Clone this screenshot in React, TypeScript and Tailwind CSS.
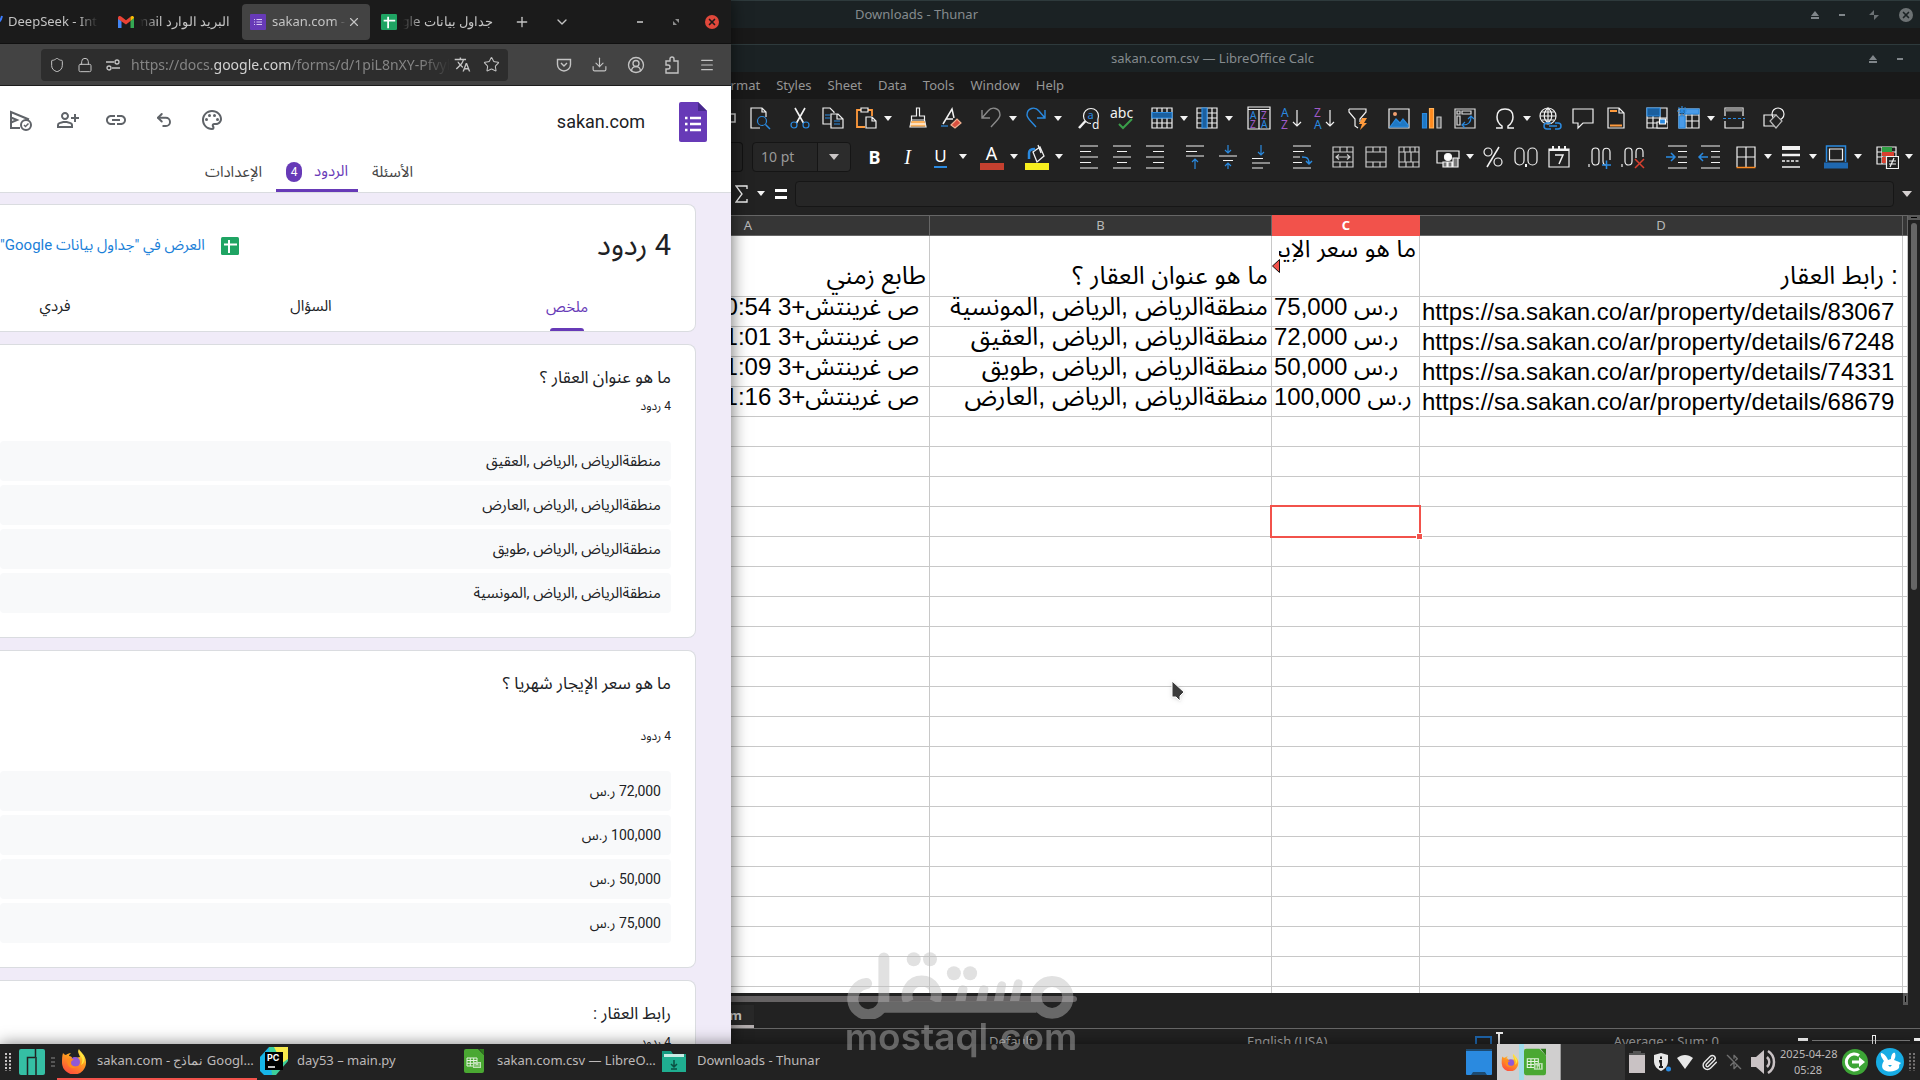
import React from 'react';
import {
  Shield, Lock, Star, Download, CircleUserRound, Puzzle, Menu, X, Plus, ChevronDown,
  Paperclip, BluetoothOff, Undo2,
} from 'lucide-react';
import { MdOutlinePalette, MdLink, MdOutlinePersonAddAlt, MdTranslate } from 'react-icons/md';

type Kids = { children?: React.ReactNode };

/* ---------- shared drawings ---------- */

function Ico({ children }: Kids) {
  return (
    <svg viewBox="0 0 24 24" className="size-6" fill="none" stroke="#f2f2f2" strokeWidth="1.2" aria-hidden="true">
      {children}
    </svg>
  );
}

function Caret() {
  return <svg viewBox="0 0 8 5" className="h-[5px] w-2" aria-hidden="true"><path d="M0 0h8L4 5z" fill="#f2f2f2" /></svg>;
}

function Firefox({ className }: { className: string }) {
  return (
    <svg viewBox="0 0 26 26" className={className} aria-hidden="true">
      <defs>
        <linearGradient id="fx" x1="0.8" y1="0" x2="0.3" y2="1">
          <stop offset="0" stopColor="#fff44f" /><stop offset="0.45" stopColor="#ff9a1f" /><stop offset="1" stopColor="#ff4a3d" />
        </linearGradient>
      </defs>
      <path d="M2 5c1 1 2 2 3 2 1-1 3-2 5-2-1 1-2 2-2 3 2 0 3 1 3 2h3l5-1c-1-3-3-5-1-8 1 3 7 6 7 13a12 12 0 0 1-24 1C1 11 1 8 2 5z" fill="url(#fx)" />
      <circle cx="14" cy="14" r="5" fill="#9059d6" />
      <path d="M6 11c2-1 5-1 7 1-2 0-3 1-3 3 0 3 4 4 7 3-2 3-8 3-10-1-1-2-1-4-1-6z" fill="#ff8a1e" />
      <path d="M18 2c2 3 1 6 3 8 1 2 0 5-1 7 2-1 4-4 3-7-1-4-4-5-5-8z" fill="#ffe83d" />
    </svg>
  );
}

function CalcDoc({ className }: { className: string }) {
  return (
    <svg viewBox="0 0 20 24" className={className} aria-hidden="true">
      <path d="M2 0h12l6 6v16a2 2 0 0 1-2 2H2a2 2 0 0 1-2-2V2a2 2 0 0 1 2-2z" fill="#4aa832" />
      <path d="M15 0h5v6z" fill="#2d7a1c" />
      <path d="M3 9h10v8H3zM3 11.5h10M3 14.3h10M6.300 9v8M9.700 9v8" fill="none" stroke="#e4f3df" />
      <rect x="9" y="13" width="8" height="6" fill="#bfe0b5" />
      <path d="M11 18v-3M13 18v-2M15 18v-4" stroke="#4aa832" />
    </svg>
  );
}

function SheetsIcon({ className }: { className: string }) {
  return (
    <svg viewBox="0 0 18 18" className={className} aria-hidden="true">
      <rect width="18" height="18" rx="1.500" fill="#1fa463" />
      <path d="M3 7.500h13M8 3v13" stroke="#fff" strokeWidth="2" />
    </svg>
  );
}

/* ---------- browser window ---------- */

function Tab({ icon, label, dir, width }: { icon: React.ReactNode; label: string; dir: 'ltr' | 'rtl'; width: string }) {
  return (
    <button className="flex items-center gap-[6px]">
      {icon}
      <span dir={dir} className={`${width} overflow-hidden whitespace-nowrap ${dir === 'ltr' ? 'text-left [mask-image:linear-gradient(to_left,transparent,#000_12px)]' : 'text-right [mask-image:linear-gradient(to_right,transparent,#000_18px)]'}`}>{label}</span>
    </button>
  );
}

function BrowserChrome() {
  return (
    <header className="shrink-0 text-[13px] text-[#c4c4c4]">
      <div className="flex h-11 items-center border-b border-[#111] bg-[#1b1b1b]">
        <div className="w-2 shrink-0 overflow-hidden">
          <svg viewBox="0 0 8 14" className="h-3.5 w-2" aria-hidden="true"><path d="M-4 6C-1 9 1 5 2 1" stroke="#3b7cff" strokeWidth="2" fill="none" /></svg>
        </div>
        <button className="w-[90px] overflow-hidden whitespace-nowrap text-left [mask-image:linear-gradient(to_left,transparent,#000_20px)]">DeepSeek - Into</button>
        <div className="ml-5 flex w-[124px] shrink-0">
          <Tab dir="rtl" width="w-[90px]" label="البريد الوارد Gmail" icon={
            <svg viewBox="0 0 16 12" className="h-3 w-4" aria-hidden="true">
              <path d="M0 1.500V12h3.500V5z" fill="#4285f4" /><path d="M16 1.500V12h-3.500V5z" fill="#34a853" />
              <path d="M0 2c0-2 2-2.500 3.500-1.300L8 4.200 12.500.7 12.500 5 8 8.500 0 3z" fill="#ea4335" /><path d="M12.500.7C14 -.5 16 0 16 2l-3.500 3z" fill="#fbbc04" />
            </svg>} />
        </div>
        <div className="flex h-9 w-32 shrink-0 items-center justify-between rounded bg-[#434343] pl-2 pr-[9px]">
          <Tab dir="ltr" width="w-[74px]" label="sakan.com - G" icon={
            <svg viewBox="0 0 16 16" className="size-4 shrink-0" aria-hidden="true">
              <rect width="16" height="16" rx="1" fill="#673ab7" /><path d="M4 5.500h1M4 8h1M4 10.500h1M6.500 5.500H12M6.500 8H12M6.500 10.500H12" stroke="#d9c9f5" />
            </svg>} />
          <button aria-label="Close tab"><X className="size-3.5" /></button>
        </div>
        <div className="ml-[11px] flex w-[113px] shrink-0">
          <Tab dir="rtl" width="w-[90px]" label="جداول بيانات Google" icon={<SheetsIcon className="size-4" />} />
        </div>
        <button aria-label="New tab" className="ml-5"><Plus className="size-4" /></button>
        <button aria-label="List all tabs" className="ml-6"><ChevronDown className="size-4" /></button>
        <div className="ml-auto flex items-center pr-px">
          <button aria-label="Minimize" className="flex w-9 justify-center"><span className="h-0.5 w-1.5 bg-[#a0a0a0]" /></button>
          <button aria-label="Restore" className="flex w-9 justify-center">
            <svg viewBox="0 0 16 16" className="size-4" aria-hidden="true"><path d="M7 5h4v4zM5 7v4h4z" fill="#8d8d8d" /></svg>
          </button>
          <button aria-label="Close" className="flex w-9 justify-center">
            <span className="flex size-[14px] items-center justify-center rounded-full bg-[#e0483b] text-[#1b1b1b]"><X className="size-2.5" strokeWidth={4} /></span>
          </button>
        </div>
      </div>
      <div className="flex h-[42px] items-center border-b border-[#1c1c1c] bg-[#434343]">
        <div className="ml-[41px] flex h-8 w-[467px] items-center rounded bg-[#2d2d2d] px-2">
          <Shield className="size-4" strokeWidth={1.5} />
          <Lock className="ml-3 size-4" strokeWidth={1.5} />
          <svg viewBox="0 0 16 16" className="ml-3 size-4" fill="none" stroke="#c4c4c4" strokeWidth="1.300" aria-hidden="true">
            <path d="M1 5h8M7 11h8" /><circle cx="12" cy="5" r="2" /><circle cx="4" cy="11" r="2" />
          </svg>
          <div role="textbox" aria-label="Address" tabIndex={0} className="ml-2.5 min-w-0 flex-1 overflow-hidden whitespace-nowrap text-sm text-[#858585] [mask-image:linear-gradient(to_left,transparent,#000_30px)]">
            https://docs.<span className="text-[#d2d2d2]">google.com</span>/forms/d/1piL8nXY-Pfvyh
          </div>
          <button aria-label="Translate page" className="ml-1"><MdTranslate className="size-[17px]" /></button>
          <button aria-label="Bookmark" className="ml-3"><Star className="size-[17px]" strokeWidth={1.5} /></button>
        </div>
        <div className="ml-auto flex items-center gap-[19px] pr-4">
          <button aria-label="Save to Pocket">
            <svg viewBox="0 0 16 16" className="size-4" fill="none" stroke="#c4c4c4" strokeWidth="1.400" aria-hidden="true"><path d="M1.500 2.500h13v5a6.500 6.500 0 0 1-13 0zM5 6l3 3 3-3" /></svg>
          </button>
          <button aria-label="Downloads"><Download className="size-[17px]" strokeWidth={1.6} /></button>
          <button aria-label="Account"><CircleUserRound className="size-[18px]" strokeWidth={1.8} /></button>
          <button aria-label="Extensions">
            <svg viewBox="0 0 16 18" className="h-[18px] w-4" fill="none" stroke="#c4c4c4" strokeWidth="1.400" aria-hidden="true"><path d="M6 5V3a2 2 0 0 1 4 0v2h4v12H2v-4h2a2 2 0 0 0 0-4H2V5z" /></svg>
          </button>
          <button aria-label="Menu"><Menu className="size-4" strokeWidth={1.8} /></button>
        </div>
      </div>
    </header>
  );
}

function FormHeader() {
  return (
    <div className="shrink-0 border-b border-[#dadce0] bg-white">
      <div className="flex h-[68px] items-center pr-6 pt-1">
        <svg viewBox="0 0 28 40" className="h-10 w-7" aria-hidden="true">
          <path d="M2 0h17l9 9v29a2 2 0 0 1-2 2H2a2 2 0 0 1-2-2V2a2 2 0 0 1 2-2z" fill="#673ab7" />
          <path d="M19 0v9h9z" fill="#47288c" />
          <path d="M11 16h11M11 22h11M11 28h11M6 16h2.500M6 22h2.500M6 28h2.500" stroke="#fff" strokeWidth="2.500" />
        </svg>
        <h1 dir="ltr" className="mr-[34px] text-lg text-[#202124]">sakan.com</h1>
        <div dir="ltr" className="ml-2 mr-auto mb-1 flex items-center gap-6 text-[#5f6368]">
          <button aria-label="منشور">
            <svg viewBox="0 0 24 24" className="size-6" fill="none" stroke="#5f6368" strokeWidth="2" aria-hidden="true">
              <path d="M12 20l-9 0V4l18 7.500M3 9.500l6 2.500-6 2.500" /><circle cx="18" cy="17" r="5" /><path d="M16 17l1.500 1.500L20.500 15.500" strokeWidth="1.500" />
            </svg>
          </button>
          <button aria-label="إضافة متعاونين"><MdOutlinePersonAddAlt className="size-6" /></button>
          <button aria-label="نسخ الرابط"><MdLink className="size-6" /></button>
          <button aria-label="تراجع" className="flex size-6 items-center justify-center"><Undo2 className="size-[18px]" strokeWidth={2.6} /></button>
          <button aria-label="تخصيص المظهر"><MdOutlinePalette className="size-6" /></button>
        </div>
      </div>
      <nav className="mr-[304px] flex h-[38px] pt-1.5 text-[15px] text-[#444]">
        <button className="mx-3.5 pb-2">الأسئلة</button>
        <button className="flex w-[82px] items-center justify-center gap-3 border-b-[3px] border-[#673ab7] pb-1.5 text-[#673ab7]">
          الردود<span className="flex h-5 w-4 items-center justify-center rounded-full bg-[#673ab7] text-xs text-white">4</span>
        </button>
        <button className="mx-3.5 pb-2">الإعدادات</button>
      </nav>
    </div>
  );
}

function QuestionCard({ title, gap, answers, size = 'text-sm' }: { title: string; gap: string; answers: string[]; size?: string }) {
  return (
    <section className="shrink-0 rounded-br-lg rounded-tr-lg border border-l-0 border-[#dadce0] bg-white pb-6 pr-6 pt-5">
      <h2 className="text-[17px] leading-[25px]">{title}</h2>
      <p className={`${gap} text-xs leading-4`}>4 ردود</p>
      <ul className={`mt-[27px] flex flex-col gap-1 ${size}`}>
        {answers.map((a) => <li key={a} className="flex h-10 items-center rounded bg-[#f8f9fa] px-2.5">{a}</li>)}
      </ul>
    </section>
  );
}

function BrowserWindow() {
  return (
    <section className="z-10 flex min-w-0 flex-[731] flex-col overflow-hidden bg-[#f0ebf8] shadow-[0_0_16px_rgba(0,0,0,0.6)]">
      <BrowserChrome />
      <div dir="rtl" className="flex min-h-0 flex-1 flex-col font-[Roboto,'Noto_Sans_Arabic','DejaVu_Sans',sans-serif] text-[#202124]">
        <FormHeader />
        <div className="flex min-h-0 flex-1 flex-col gap-3 overflow-hidden pr-[35px] pt-[11px]">
          <section className="shrink-0 overflow-hidden rounded-br-lg rounded-tr-lg border border-l-0 border-[#dadce0] bg-white">
            <div className="flex h-[81px] items-center pr-6">
              <h2 className="text-[29px]">4 ردود</h2>
              <a href="#sheet" className="mr-auto flex items-center gap-4 whitespace-nowrap text-[15px] text-[#1a80d8]">
                <SheetsIcon className="size-[18px]" />العرض في "جداول بيانات Google"
              </a>
            </div>
            <nav className="flex h-[45px] text-[15px]">
              <button className="flex w-64 shrink-0 flex-col items-center justify-between pt-2.5 text-[#673ab7]">ملخص<span className="h-[3px] w-[34px] rounded-t bg-[#673ab7]" /></button>
              <button className="w-64 shrink-0 pb-1">السؤال</button>
              <button className="w-64 shrink-0 pb-1">فردي</button>
            </nav>
          </section>
          <QuestionCard size="text-[15px]" title="ما هو عنوان العقار ؟" gap="mt-2" answers={[
            'منطقةالرياض ,الرياض ,العقيق', 'منطقةالرياض ,الرياض ,العارض', 'منطقةالرياض ,الرياض ,طويق', 'منطقةالرياض ,الرياض ,المونسية']} />
          <QuestionCard title="ما هو سعر الإيجار شهريا ؟" gap="mt-8" answers={['72,000 ر.س', '100,000 ر.س', '50,000 ر.س', '75,000 ر.س']} />
          <QuestionCard title="رابط العقار :" gap="mt-2" answers={[]} />
        </div>
      </div>
    </section>
  );
}

/* ---------- spreadsheet window ---------- */

function WinButtons({ full }: { full?: boolean }) {
  return (
    <div className="ml-auto flex items-center text-[#858b8e]">
      <button aria-label="Roll up" className="flex w-[27px] justify-center">
        <svg viewBox="0 0 10 10" className="size-2.5" aria-hidden="true"><path d="M5 1l4 5H1zM1 7h8v2H1z" fill="#80868a" /></svg>
      </button>
      <button aria-label="Minimize" className="flex w-[27px] justify-center"><span className="h-0.5 w-1.5 bg-[#80868a]" /></button>
      {full && (
        <>
          <button aria-label="Restore" className="flex w-[37px] justify-center">
            <svg viewBox="0 0 10 10" className="size-2.5" aria-hidden="true"><path d="M5 0v5H0zM5 5h5L5 10z" fill="#6b7174" /></svg>
          </button>
          <button aria-label="Close" className="mx-[7px] flex size-[14px] items-center justify-center rounded-full bg-[#6d7274] text-[#1b2224]"><X className="size-2.5" strokeWidth={4} /></button>
        </>
      )}
    </div>
  );
}

function B({ label, arrow, children }: { label: string; arrow?: boolean; children: React.ReactNode }) {
  return (
    <>
      <button aria-label={label} title={label} className="flex w-[33px] shrink-0 justify-center">{children}</button>
      {arrow && <button aria-label={`${label} options`} className="flex w-3 shrink-0 justify-center"><Caret /></button>}
    </>
  );
}

function Sep({ className = 'w-[7px]' }: { className?: string }) {
  return <span className={`${className} shrink-0`} />;
}

function T({ x, y, s = 10, c = '#f2f2f2', children }: { x: number; y: number; s?: number; c?: string; children: React.ReactNode }) {
  return <text x={x} y={y} fontSize={s} fill={c} stroke="none" fontFamily="Noto Sans, sans-serif">{children}</text>;
}

const blue = '#2a8ae0';

function StandardBar() {
  return (
    <div className="flex h-[38px] shrink-0 items-center overflow-hidden">
      <div className="w-3 shrink-0 overflow-hidden"><svg viewBox="0 0 12 24" className="h-6 w-3" aria-hidden="true"><path d="M-6 8H4v8H0" stroke="#ccc" fill="none" strokeWidth="1.5" /></svg></div>
      <B label="Print preview"><Ico><path d="M12 22H3V2h11l4 4v5M14 2v4h4" /><g stroke={blue}><circle cx="14" cy="15" r="4.500" /><path d="M17.500 18.500 22 23" strokeWidth="1.500" /></g></Ico></B>
      <Sep />
      <B label="Cut"><Ico><path d="M7 2l8.500 15M17 2L8.500 17" strokeWidth="1.600" /><g stroke={blue}><circle cx="6" cy="19" r="3" /><circle cx="18" cy="19" r="3" /></g></Ico></B>
      <B label="Copy"><Ico><path d="M10 18H2V2h7l4 4v1M10 22V8h7l5 5v9zM16 8v5h6" /><path d="M4 9h5M4 12h5M13 15h6M13 18h6" stroke={blue} /></Ico></B>
      <B label="Paste" arrow><Ico><path d="M7 4H3v17h8M14 4h4v6" stroke="#ff9a3c" strokeWidth="1.800" /><path d="M7 2h7v4H7zM12 22V11h6l4 4v7zM18 11v4h4" /></Ico></B>
      <Sep />
      <B label="Clone formatting"><Ico><path d="M10.500 2h3v8h5v4H5.500v-4h5zM5.500 14 4 21h16l-1.500-7" /><path d="M5.500 15h13l1 5.500h-15z" fill="#ffb35c" stroke="none" /><path d="M5 18h14" stroke="#fff" /></Ico></B>
      <B label="Clear formatting"><Ico><path d="M4 18 13 3l2 9M7 13h7" strokeWidth="1.500" /><path d="M2 20h7" stroke={blue} /><path d="M12 19l6-6 4 4-6 5z" fill="#d9503f" stroke="#f0b090" /></Ico></B>
      <Sep />
      <B label="Undo" arrow><Ico><path d="M3 4v8h8M3 12 9 5c4-5 12-3 12 4 0 3-2 4-9 12" stroke="#8b8b8b" strokeWidth="1.400" /></Ico></B>
      <B label="Redo" arrow><Ico><path d="M21 4v8h-8M21 12 15 5C11 0 3 2 3 9c0 3 2 4 9 12" stroke={blue} strokeWidth="1.400" /></Ico></B>
      <Sep className="w-2" />
      <B label="Find"><Ico><circle cx="14" cy="10" r="7.500" /><path d="M8.500 15 2 22" strokeWidth="2.500" /><T x={10.5} y={13} s={11} c={blue}>a</T><rect x="14" y="13" width="9" height="10" fill="#222" stroke="none" /><T x={15} y={23} s={12}>d</T></Ico></B>
      <B label="Spelling"><Ico><T x={0} y={12} s={14}>abc</T><path d="M9 18l4 4 9-9" stroke="#3a9e4a" strokeWidth="2" /></Ico></B>
      <Sep />
      <B label="Row" arrow><Ico><path d="M2 2h20v20H2zM2 12h20M2 17h20M7 2v20M12 2v20M17 2v20" /><path d="M2 6.500h20v5.500H2z" fill="#1b5f9e" stroke={blue} /></Ico></B>
      <B label="Column" arrow><Ico><path d="M2 2h20v20H2zM2 7h20M2 12h20M2 17h20M12 2v20M17 2v20" /><path d="M7 2h5v20H7z" fill="#1b5f9e" stroke={blue} /></Ico></B>
      <Sep />
      <B label="Sort"><Ico><path d="M1 1h22v22H1zM1 3.500h22M12 3v20" /><T x={3} y={13} c={blue}>A</T><T x={3} y={22} c="#a05bc8">Z</T><T x={14} y={13} c="#a05bc8">Z</T><T x={14} y={22} c={blue}>A</T></Ico></B>
      <B label="Sort ascending"><Ico><T x={1} y={11} s={12} c={blue}>A</T><T x={1} y={23} s={12} c="#a05bc8">Z</T><path d="M17 4v16M13 16l4 4 4-4" /></Ico></B>
      <B label="Sort descending"><Ico><T x={1} y={11} s={12} c="#a05bc8">Z</T><T x={1} y={23} s={12} c={blue}>A</T><path d="M17 4v16M13 16l4 4 4-4" /></Ico></B>
      <B label="AutoFilter"><Ico><path d="M3 3h17v3l-6 7v3M3 3v3l6 7v7l3 2" /><path d="M16 12h5l-3 5h3l-7 7 2-6h-3z" fill="#ff9a3c" stroke="none" /></Ico></B>
      <Sep className="w-2" />
      <B label="Insert image"><Ico><path d="M2 3h20v19H2z" /><path d="M3 21l6-8 4 4 3-4 5 6v2z" fill="#1f78c4" stroke={blue} /><circle cx="8" cy="8" r="2" fill="#f0a070" stroke="none" /></Ico></B>
      <B label="Insert chart"><Ico><path d="M2.500 7.500h4V22h-4z" fill="#1f78c4" stroke={blue} /><path d="M9.500 2.500h4V22h-4z" fill="#ff8a1e" stroke="#ffb35c" /><path d="M17 11h4v11h-4z" fill="#555" stroke="#ccc" /></Ico></B>
      <B label="Pivot table"><Ico><path d="M2 3h20v19H2zM4 5h3v3H4zM9 5h9v3H9zM4 10h3v9H4z" stroke="#ddd" /><path d="M10 19c6 0 8-3 8-8M15 13l3-3 3 3M12 16l-3 3 3 3" stroke={blue} /></Ico></B>
      <Sep />
      <B label="Special character" arrow><Ico><path d="M3 22h6v-2c-3-2-5-4-5-9 0-5 3-8 8-8s8 3 8 8c0 5-2 7-5 9v2h6" strokeWidth="1.500" /></Ico></B>
      <B label="Hyperlink"><Ico><circle cx="10" cy="10" r="8" /><path d="M10 2v14M2 10h16M3.500 6h13M4 14h12M10 2c-5 4-5 11 0 15M10 2c5 4 5 11 0 15" /><path d="M13 17H9c-4 0-4 6 0 6h4M17 17h3c4 0 4 6 0 6h-3M11 20h8" stroke={blue} strokeWidth="1.500" /></Ico></B>
      <B label="Comment"><Ico><path d="M2 3h20v14H12l-5 5v-5H2z" /></Ico></B>
      <B label="Headers and footers"><Ico><path d="M4 2h11l5 5v15H4zM15 2v5h5" /><path d="M6 5h7M6 19.500h12" stroke="#ff9a3c" strokeWidth="2" /></Ico></B>
      <Sep />
      <B label="Print area"><Ico><path d="M3 2h20v20H3zM3 12h20M3 17h20M9 2v20M16 2v20" /><path d="M3 2h13v8H3z" fill="#1b5f9e" stroke={blue} /><path d="M13 16h11v6H13z" fill="#222" /><path d="M15.500 13h6v5h-6z" fill={blue} stroke="#fff" /></Ico></B>
      <B label="Freeze" arrow><Ico><path d="M2 3h20v19H2zM9 3v19M15 3v19M2 9h20M2 15h20" /><path d="M8 3h14v5H8zM2 10h6v12H2z" fill="#4a9be8" stroke={blue} /><path d="M5 0v10M0 5h10M1.500 1.500l7 7M8.500 1.500l-7 7" stroke={blue} /></Ico></B>
      <B label="Split window"><Ico><path d="M3 10V2h18v8M3 15v7h18v-7" /><path d="M3 4h18" stroke="#888" strokeWidth="3" /><path d="M1 12.500h22" stroke={blue} strokeDasharray="3 2" /></Ico></B>
      <Sep />
      <B label="Draw functions"><Ico><path d="M2 9h12v11H2z" /><circle cx="16" cy="8" r="6" /><path d="M14 9l6 6-6 7-6-7z" fill="#222" stroke="#bbb" /></Ico></B>
    </div>
  );
}

function FormatBar() {
  return (
    <div className="flex h-[39px] shrink-0 items-center overflow-hidden">
      <span className="mr-[9px] h-[30px] w-3 shrink-0 rounded-r border border-l-0 border-[#111]" />
      <div className="flex h-[30px] w-[99px] shrink-0 rounded border border-[#151515] bg-[#262626]">
        <input aria-label="Font size" defaultValue="10 pt" className="w-16 bg-transparent pl-2 text-sm text-[#999] outline-none" />
        <button aria-label="Font size list" className="flex flex-1 items-center justify-center rounded-r border-l border-[#151515] bg-[#2c2c2c]"><svg viewBox="0 0 10 6" className="h-1.5 w-2.5" aria-hidden="true"><path d="M0 0h10L5 6z" fill="#c9c5c5" /></svg></button>
      </div>
      <Sep />
      <B label="Bold"><span className="text-lg font-bold leading-6 text-white">B</span></B>
      <B label="Italic"><span className="font-['Liberation_Serif',serif] text-xl italic leading-6 text-white">I</span></B>
      <B label="Underline" arrow><span className="border-b-2 border-[#2a8ae0] text-[17px] leading-5 text-white">U</span></B>
      <Sep className="w-1.5" />
      <B label="Font color" arrow><span className="flex w-6 justify-center border-b-[7px] border-[#c5402f] text-lg leading-[19px] text-white">A</span></B>
      <B label="Highlighting" arrow><svg viewBox="0 0 24 26" className="h-[26px] w-6" fill="none" stroke="#f2f2f2" strokeWidth="1.300" aria-hidden="true"><path d="M8 8l7-5 4 9-7 6zM13 1l3 8" /><path d="M4 15V9c0-3 3-4 6-4" stroke={blue} strokeWidth="2.500" /><path d="M0 22.500h24" stroke="#f7ef1e" strokeWidth="7" /></svg></B>
      <Sep />
      <B label="Align left"><Ico><path d="M3 1h18M3 6.500h11M3 12h18M3 17.500h11M3 23h18" /></Ico></B>
      <B label="Align center"><Ico><path d="M3 1h18M7 6.500h10M3 12h18M7 17.500h10M3 23h18" /></Ico></B>
      <B label="Align right"><Ico><path d="M3 1h18M10 6.500h11M3 12h18M10 17.500h11M3 23h18" /></Ico></B>
      <Sep />
      <B label="Align top"><Ico><path d="M3 1h18M3 6.500h11M3 11h18" /><path d="M12 24V14M9 17l3-3 3 3" stroke={blue} /></Ico></B>
      <B label="Center vertically"><Ico><path d="M3 11h18M7 15.500h10" /><path d="M12 0v8M9 5l3 3 3-3M12 24v-6M9 21l3-3 3 3" stroke={blue} /></Ico></B>
      <B label="Align bottom"><Ico><path d="M3 13.500h11M3 18h18M3 23h11" /><path d="M12 0v10M9 7l3 3 3-3" stroke={blue} /></Ico></B>
      <Sep className="w-2" />
      <B label="Wrap text"><Ico><path d="M3 1h18M3 6.500h11M3 12h7M3 17.500h9M3 23h18" /><path d="M12 12c6 0 7 2 7 7M16 16l3 3 3-3" stroke={blue} strokeWidth="1.500" /></Ico></B>
      <Sep className="w-2" />
      <B label="Merge and center"><Ico><path d="M2 2h20v20H2zM2 7h20M2 17h20M9 2v5M16 2v5M9 17v5M16 17v5M5 12h14M8 9.500 5 12l3 2.500M16 9.500l3 2.500-3 2.500" stroke="#ccc" /></Ico></B>
      <B label="Merge cells"><Ico><path d="M2 2h20v20H2zM2 7h20M2 17h20M9 2v5M16 2v5M9 17v5M16 17v5" stroke="#ccc" /></Ico></B>
      <B label="Unmerge cells"><Ico><path d="M2 2h20v20H2zM2 7h20M2 17h20M7 2v5M13 2v5M18 2v5M8 7v10M14 7v10M9 17v5M16 17v5" stroke="#ccc" /></Ico></B>
      <Sep className="w-1.5" />
      <B label="Currency" arrow><Ico><path d="M9 18H1V6h22v8" /><circle cx="12" cy="12" r="3.500" fill="#fff" /><path d="M7 17h4v5H7zM12 17h4v5h-4zM17 13h5v9h-5z" fill="#777" /></Ico></B>
      <B label="Percent"><Ico><circle cx="7" cy="7" r="4" /><circle cx="17" cy="17" r="4" /><path d="M18 2 6 22" strokeWidth="1.500" /></Ico></B>
      <B label="Number"><Ico><rect x="1" y="3" width="9" height="17" rx="4.500" /><rect x="14" y="3" width="9" height="17" rx="4.500" /><path d="M12 19v3" strokeWidth="2" /></Ico></B>
      <B label="Date"><Ico><path d="M2 4h20v18H2z" /><path d="M2 5h20M6 1v5M12 1v5M18 1v5" strokeWidth="2" /><path d="M8 10h8l-4 9" strokeWidth="1.500" /></Ico></B>
      <Sep className="w-2" />
      <B label="Add decimal"><Ico><rect x="4" y="3" width="7" height="17" rx="3.500" /><path d="M22 15V7c0-5-7-5-7 0v9c0 2 1 4 3 4M1 19v3" /><path d="M14 20h9M18.500 15.500V25" stroke={blue} strokeWidth="1.500" /></Ico></B>
      <B label="Delete decimal"><Ico><rect x="4" y="3" width="7" height="17" rx="3.500" /><path d="M22 12V7c0-5-7-5-7 0v6M1 19v3" /><path d="M14 14l9 9M23 14l-9 9" stroke="#d9402f" strokeWidth="1.500" /></Ico></B>
      <Sep className="w-2.5" />
      <B label="Increase indent"><Ico><path d="M4 1h19M14 6.500h9M14 12h9M14 17.500h9M4 23h19" /><path d="M2 12h8M7 8l4 4-4 4" stroke={blue} strokeWidth="1.500" /></Ico></B>
      <B label="Decrease indent"><Ico><path d="M4 1h19M14 6.500h9M14 12h9M14 17.500h9M4 23h19" /><path d="M11 12H2M6 8l-4 4 4 4" stroke={blue} strokeWidth="1.500" /></Ico></B>
      <Sep className="w-1" />
      <B label="Borders" arrow><Ico><path d="M3 22V2h18v20M12 2v20M3 12h18" /><path d="M2.500 22.500h19" stroke="#ff8a1e" strokeWidth="1.500" /></Ico></B>
      <B label="Border style" arrow><Ico><path d="M3 3h18" strokeWidth="4" /><path d="M3 10h18" strokeWidth="2.500" /><path d="M3 16h18" strokeWidth="1.500" strokeDasharray="3 1.500" /><path d="M3 22h18" strokeWidth="1.500" /></Ico></B>
      <B label="Border color" arrow><Ico><path d="M2.500 17V1h19v16" stroke={blue} strokeWidth="1.500" /><path d="M5.500 4h13v11h-13z" /><path d="M0 20.500h24" stroke="#1f68b0" strokeWidth="6" /></Ico></B>
      <Sep className="w-1.5" />
      <B label="Conditional formatting" arrow><Ico><path d="M2 2h19v17H2zM2 7h19M2 12h19M7 2v17" /><path d="M7 2h10v5H7z" fill="#2f9e44" stroke="none" /><path d="M7 7h12v4H7zM7 12h5v6H7z" fill="#d9402f" stroke="none" /><path d="M11.500 11.500h12v12h-12z" fill="#222" /><path d="M14 16h7M14 19h7M19 13l-4 9" /></Ico></B>
    </div>
  );
}

const records = [
  { stamp: '2025/04/28 5:20:54 ص غرينتش+3', title: 'منطقةالرياض ,الرياض ,المونسية', price: '75,000 ر.س', url: 'https://sa.sakan.co/ar/property/details/83067' },
  { stamp: '2025/04/28 5:21:01 ص غرينتش+3', title: 'منطقةالرياض ,الرياض ,العقيق', price: '72,000 ر.س', url: 'https://sa.sakan.co/ar/property/details/67248' },
  { stamp: '2025/04/28 5:21:09 ص غرينتش+3', title: 'منطقةالرياض ,الرياض ,طويق', price: '50,000 ر.س', url: 'https://sa.sakan.co/ar/property/details/74331' },
  { stamp: '2025/04/28 5:21:16 ص غرينتش+3', title: 'منطقةالرياض ,الرياض ,العارض', price: '100,000 ر.س', url: 'https://sa.sakan.co/ar/property/details/68679' },
];

const cell = 'border-b border-r border-[#c8c8c8] p-0 align-top overflow-hidden whitespace-nowrap';

function Sheet() {
  const head = 'border-y border-r border-[#666] p-0 text-[13px] font-normal leading-[17px]';
  return (
    <div className="flex min-h-0 flex-1 overflow-hidden bg-white">
      <div className="min-w-0 flex-1 overflow-hidden">
        <table className="w-full table-fixed border-separate border-spacing-0 font-['Liberation_Sans','Noto_Sans_Arabic','DejaVu_Sans',sans-serif] text-2xl leading-[27px] text-black">
          <colgroup><col className="w-[199px]" /><col className="w-[342px]" /><col className="w-[148px]" /><col /><col className="w-[5px]" /></colgroup>
          <thead className="font-['Noto_Sans',sans-serif]">
            <tr className="h-[21px] bg-[#363636] text-[#b8b8b8]">
              <th className={`${head} pr-[164px]`}>A</th><th className={head}>B</th>
              <th className="border-y border-[#f2524b] bg-[#f2524b] p-0 text-[13px] font-bold leading-[17px] text-white">C</th>
              <th className={head}>D</th><th className={head} />
            </tr>
          </thead>
          <tbody>
            <tr className="h-[61px] text-[25px]">
              <td dir="rtl" className={`${cell} pr-[3px]`}><div className="mt-[26px]">طابع زمني</div></td>
              <td dir="rtl" className={`${cell} pr-[3px]`}><div className="mt-[26px]">ما هو عنوان العقار ؟</div></td>
              <td dir="rtl" className={`${cell} relative pr-[3px]`}>
                <div className="ml-[7px] overflow-hidden text-2xl leading-[26px]">ما هو سعر الإيجار</div>
                <svg viewBox="0 0 8 14" className="absolute left-0 top-[23px] h-3.5 w-2" aria-hidden="true"><path d="M7.500.5v13L.5 7z" fill="#f2524b" stroke="#111" /></svg>
              </td>
              <td dir="ltr" className={`${cell} pr-1 text-right`}><div className="mt-[26px]">رابط العقار :</div></td>
              <td className={cell} />
            </tr>
            {records.map((r) => (
              <tr key={r.url} className="h-[30px]">
                <td dir="ltr" className={`${cell} pr-2.5`}><div className="flex h-[29px] justify-end overflow-hidden leading-[19px]">{r.stamp}</div></td>
                <td dir="rtl" className={`${cell} pr-[3px]`}><div className="h-[29px] overflow-hidden text-[25px] leading-[19px]">{r.title}</div></td>
                <td dir="ltr" className={`${cell} pl-0.5`}><div className="h-[29px] overflow-hidden leading-[19px]">{r.price}</div></td>
                <td dir="ltr" className={`${cell} pl-0.5`}><div className="h-[29px] overflow-hidden leading-[30px]">{r.url}</div></td>
                <td className={cell} />
              </tr>
            ))}
            {Array.from({ length: 20 }, (_, i) => (
              <tr key={i} className="h-[30px]">
                <td className={cell} /><td className={cell} />
                {i === 3
                  ? <td className="relative border-b border-r border-[#c8c8c8] p-0"><span className="absolute -inset-0.5 border-2 border-[#f2524b]" /><span className="absolute -bottom-1 -right-1 size-[7px] border border-white bg-[#f2524b]" /></td>
                  : <td className={cell} />}
                <td className={cell} /><td className={cell} />
              </tr>
            ))}
          </tbody>
        </table>
      </div>
      <div className="flex w-3 shrink-0 flex-col items-center bg-[#222]">
        <span className="flex h-[5px] w-full items-center justify-center bg-[#5a5a5a]"><span className="h-px w-1.5 bg-black" /></span>
        <span className="mt-[3px] h-[367px] w-1.5 rounded-full bg-[#666]" />
      </div>
    </div>
  );
}

function SpreadsheetWindow() {
  return (
    <section className="flex min-w-0 flex-[1189] flex-col overflow-hidden bg-[#222] text-[13px]">
      <div className="flex h-7 shrink-0 items-center border-t border-[#2e3a3c] bg-[#1b2224] text-[#858b8e]">
        <span className="ml-[124px]">Downloads - Thunar</span>
        <WinButtons full />
      </div>
      <div className="h-4 shrink-0 bg-[#191919]" />
      <div className="flex h-7 shrink-0 items-center border-t border-[#2e3a3c] bg-[#1b2224] text-[#858b8e]">
        <span className="ml-[380px]">sakan.com.csv — LibreOffice Calc</span>
        <WinButtons /><span className="w-[7px]" />
      </div>
      <nav className="flex h-[27px] shrink-0 items-center gap-4 bg-[#191919] text-[#969696]">
        <button className="-ml-[15px]">Format</button><button>Styles</button><button>Sheet</button><button>Data</button>
        <button>Tools</button><button>Window</button><button>Help</button>
      </nav>
      <StandardBar />
      <FormatBar />
      <div className="flex h-[39px] shrink-0 items-center gap-2 pb-1 pr-2">
        <div className="flex w-9 items-center gap-2 pl-1">
          <button aria-label="Select function"><svg viewBox="0 0 14 18" className="h-[18px] w-3.5" fill="none" stroke="#eee" strokeWidth="1.300" aria-hidden="true"><path d="M12 4V1H1l6 8-6 8h11v-3" /></svg></button>
          <Caret />
        </div>
        <button aria-label="Formula" className="flex w-3 flex-col gap-1"><span className="h-[3px] bg-white" /><span className="h-[3px] bg-white" /></button>
        <input aria-label="Input line" className="h-[26px] min-w-0 flex-1 rounded border border-[#161616] bg-[#262626]" />
        <button aria-label="Expand formula bar"><svg viewBox="0 0 10 6" className="h-1.5 w-2.5" aria-hidden="true"><path d="M0 0h10L5 6z" fill="#d5d0d0" /></svg></button>
      </div>
      <Sheet />
      <div className="flex h-[35px] shrink-0 flex-col">
        <div className="flex h-3 items-start">
          <span className="mt-[3px] h-1.5 w-[346px] rounded-r-full bg-[#666364]" />
          <span className="ml-auto mr-3 flex h-3 w-[5px] items-center justify-center bg-[#5a5a5a]"><span className="h-1.5 w-px bg-black" /></span>
        </div>
        <button className="flex h-[23px] w-[23px] items-end justify-end overflow-hidden border-b-[3px] border-[#b5afb0] bg-[#292929] pr-3 font-bold text-[#c8c8c8]">sakan.com</button>
      </div>
      <div className="flex h-4 shrink-0 items-start overflow-hidden border-t border-[#666] pt-[3px] leading-[18px] text-[#a8a8a8]">
        <span className="ml-[258px] w-[258px]">Default</span>
        <span className="w-[228px]">English (USA)</span>
        <span className="mt-1 h-3 w-[17px] border-2 border-[#1f68b0]" />
        <span className="ml-1 h-4 w-[7px] border-t-2 border-[#eee] px-[2px]"><span className="block h-4 w-0.5 bg-[#eee]" /></span>
        <span className="ml-auto mr-[79px]">Average: ; Sum: 0</span>
        <span className="mt-1.5 h-[3px] w-2.5 bg-white" />
        <span className="ml-1 mr-1 mt-2 flex h-px w-[98px] items-center justify-end bg-[#888]"><span className="mr-[34px] h-3 w-1 shrink-0 border border-white" /></span>
        <span className="mt-1.5 h-[3px] w-1.5 bg-white" />
      </div>
    </section>
  );
}

/* ---------- taskbar ---------- */

function Grip() {
  return <svg viewBox="0 0 8 20" className="h-5 w-2 shrink-0" aria-hidden="true"><path d="M2 1v18M6 1v18" stroke="#c9c5c5" strokeWidth="2" strokeDasharray="2 1.500" /></svg>;
}

function Task({ icon, label, active }: { icon: React.ReactNode; label: string; active?: boolean }) {
  return (
    <button className={`flex h-full w-[200px] shrink-0 items-center gap-2.5 border-b-2 pl-1 text-left ${active ? 'border-[#f2524b]' : 'border-transparent'}`}>
      <span className="flex w-[26px] shrink-0 justify-center">{icon}</span>
      <span className="truncate">{label}</span>
    </button>
  );
}

function Taskbar() {
  return (
    <footer className="z-20 flex h-9 shrink-0 items-center bg-[#222] text-[13px] text-[#bdb9b9] shadow-[0_0_16px_rgba(0,0,0,0.5)]">
      <div className="ml-1 flex items-center"><Grip /></div>
      <button aria-label="Applications" className="ml-[7px]">
        <svg viewBox="0 0 26 26" className="size-[26px]" aria-hidden="true"><rect width="26" height="26" rx="2" fill="#35bfa4" /><path d="M8.500 26V8.500H16M16.500 0v8.500M17 8v18" stroke="#222" strokeWidth="1.500" fill="none" /></svg>
      </button>
      <svg viewBox="0 0 4 10" className="ml-1.5 mr-0.5 h-2.5 w-1" aria-hidden="true"><path d="M0 1h4M0 5h4M0 9h4" stroke="#888" /></svg>
      <Task active icon={<Firefox className="size-[26px]" />} label="sakan.com - نماذج Google Forms" />
      <Task label="day53 – main.py" icon={
        <svg viewBox="0 0 28 28" className="size-7 shrink-0" aria-hidden="true">
          <path d="M0 10 9 0h10l-5 28H4l-4-4z" fill="#16b5e8" /><path d="M9 0h13l6 5v9L16 28h-4z" fill="#3dcf9b" /><path d="M14 0h14v12l-6 4z" fill="#f7e94b" />
          <rect x="5" y="5" width="18" height="18" fill="#000" /><text x="7" y="14" fontSize="9" fontWeight="700" fill="#fff" fontFamily="Inter, sans-serif">PC</text><path d="M8 20h7" stroke="#fff" strokeWidth="1.500" />
        </svg>} />
      <Task label="sakan.com.csv — LibreOffice Calc" icon={<CalcDoc className="h-6 w-5" />} />
      <Task label="Downloads - Thunar" icon={
        <svg viewBox="0 0 24 24" className="size-6" aria-hidden="true"><path d="M0 2h9l2 3h13v18H0z" fill="#159a80" /><path d="M2 5h20v3H2z" fill="#c8ece4" /><path d="M0 8h24v15H0z" fill="#1fae90" /><path d="M12 11v7M9 15l3 3 3-3M9 20h6" stroke="#0b4f42" strokeWidth="1.500" fill="none" /></svg>} />
      <div className="ml-auto flex h-full items-center">
        <svg viewBox="0 0 26 26" className="size-[26px]" aria-hidden="true"><rect width="26" height="26" rx="1" fill="#2a8ae0" /><path d="M0 0h26v2H0zM5 26l2-3h12l2 3z" fill="#1d4a70" /></svg>
        <div className="ml-[5px] flex h-full w-16 items-center border-r border-[#999] bg-[#d0cfcf] pl-1">
          <Firefox className="size-[18px]" /><span className="h-full w-[5px] bg-[#9fdcea]" /><CalcDoc className="h-7 w-[22px]" />
        </div>
        <div className="h-full w-16 bg-[#343434]" />
        <div className="flex items-center pl-1">
          <svg viewBox="0 0 16 22" className="h-[22px] w-4" aria-hidden="true"><path d="M4 0h8v2h4v2H0V2h4z" fill="#555" /><path d="M0 4h16v18H0z" fill="#c9c2c4" /></svg>
          <svg viewBox="0 0 18 20" className="ml-2 h-5 w-[18px]" aria-hidden="true"><path d="M8 1l7 2v6c0 5-3 8-7 10-4-2-7-5-7-10V3z" fill="#e8e8e8" /><path d="M8 4.500v2.500M6 9h2v6M6 15h4" stroke="#222" strokeWidth="2" /><circle cx="15.500" cy="17" r="2.500" fill="#2a8ae0" /></svg>
          <svg viewBox="0 0 16 16" className="ml-1.5 size-4" aria-hidden="true"><path d="M0 4c5-4 11-4 16 0L8 15z" fill="#e8e8e8" /></svg>
          <Paperclip className="ml-2 size-[17px] text-[#e8e8e8]" />
          <BluetoothOff className="ml-2 size-4 text-[#707070]" />
          <svg viewBox="0 0 26 28" className="ml-2 h-7 w-[26px]" aria-hidden="true"><path d="M1 9h5l8-7v24l-8-7H1z" fill="#c9c2c4" /><path d="M17 9c3 3 3 7 0 10M18 3c8 5 8 17 0 22" stroke="#c9c2c4" strokeWidth="2.500" fill="none" /></svg>
          <time className="ml-1 w-14 whitespace-nowrap text-center text-[11px] leading-4"><span className="block">2025-04-28</span><span className="block">05:28</span></time>
          <svg viewBox="0 0 26 26" className="ml-1.5 size-[26px]" aria-hidden="true"><circle cx="13" cy="13" r="13" fill="#3da536" /><path d="M17 6.500a8 8 0 1 0 0 13" stroke="#fff" strokeWidth="3" fill="none" /><path d="M10 11.500h7V8l6 5-6 5v-3.500h-7z" fill="#fff" /></svg>
          <svg viewBox="0 0 28 28" className="ml-2 size-7" aria-hidden="true"><circle cx="14" cy="14" r="14" fill="#17ace4" /><path d="M5 5c3 0 6 4 7 7l3-1C15 7 17 4 19 5c1 3 0 5-1 7 4 1 6 4 5 8-3 4-12 5-16 1-2-3 0-7 1-8C6 10 4 7 5 5zM21 13l4 2-2 2z" fill="#fff" /><path d="M12 17h4l-2 2z" fill="#17ace4" /></svg>
        </div>
        <div className="ml-1 mr-1 opacity-50"><Grip /></div>
      </div>
    </footer>
  );
}

function Watermark() {
  return (
    <div role="img" aria-label="مستقل mostaql.com" className="pointer-events-none absolute bottom-[25px] left-[44%] z-30 text-[#bdbdbd] opacity-45">
      <svg viewBox="0 0 694 202" className="h-[67px] w-[231px]" fill="currentColor" aria-hidden="true">
        <g fill="none" stroke="currentColor" strokeWidth="33">
          <path d="M64 95A47 47 0 1 0 116 139V18" strokeLinecap="round" strokeLinejoin="round" />
          <path d="M190 150a44 44 0 1 1 80 0" /><circle cx="623" cy="137" r="48" />
        </g>
        <path d="M110 150h466v33H96z" />
        <path d="M332 148l8-36q4-12 14-12 16 2 14 14l-6 34zM395 148l8-36q4-12 14-12 16 2 14 14l-6 34zM448 148l10-48q4-12 14-12 14 2 12 14l-8 46zM496 148l12-54q4-12 14-12 14 2 12 14l-10 52z" />
        <circle cx="206" cy="22" r="21" /><circle cx="255" cy="22" r="21" /><circle cx="327" cy="64" r="21" /><circle cx="376" cy="64" r="21" />
      </svg>
      <div className="font-['Inter',sans-serif] text-[37px] font-semibold leading-9">mostaql.com</div>
    </div>
  );
}

export default function App() {
  return (
    <main className="relative flex h-screen flex-col overflow-hidden bg-[#222] font-['Noto_Sans',sans-serif]">
      <div className="flex min-h-0 flex-1">
        <BrowserWindow />
        <SpreadsheetWindow />
      </div>
      <Taskbar />
      <Watermark />
      <svg viewBox="0 0 14 22" className="pointer-events-none absolute left-[61%] top-[63%] z-30 h-[22px] w-3.5 drop-shadow" aria-hidden="true">
        <path d="M1 1v16h4l4 4v-5l4-4z" fill="#3a3a3a" stroke="#fff" />
      </svg>
    </main>
  );
}
